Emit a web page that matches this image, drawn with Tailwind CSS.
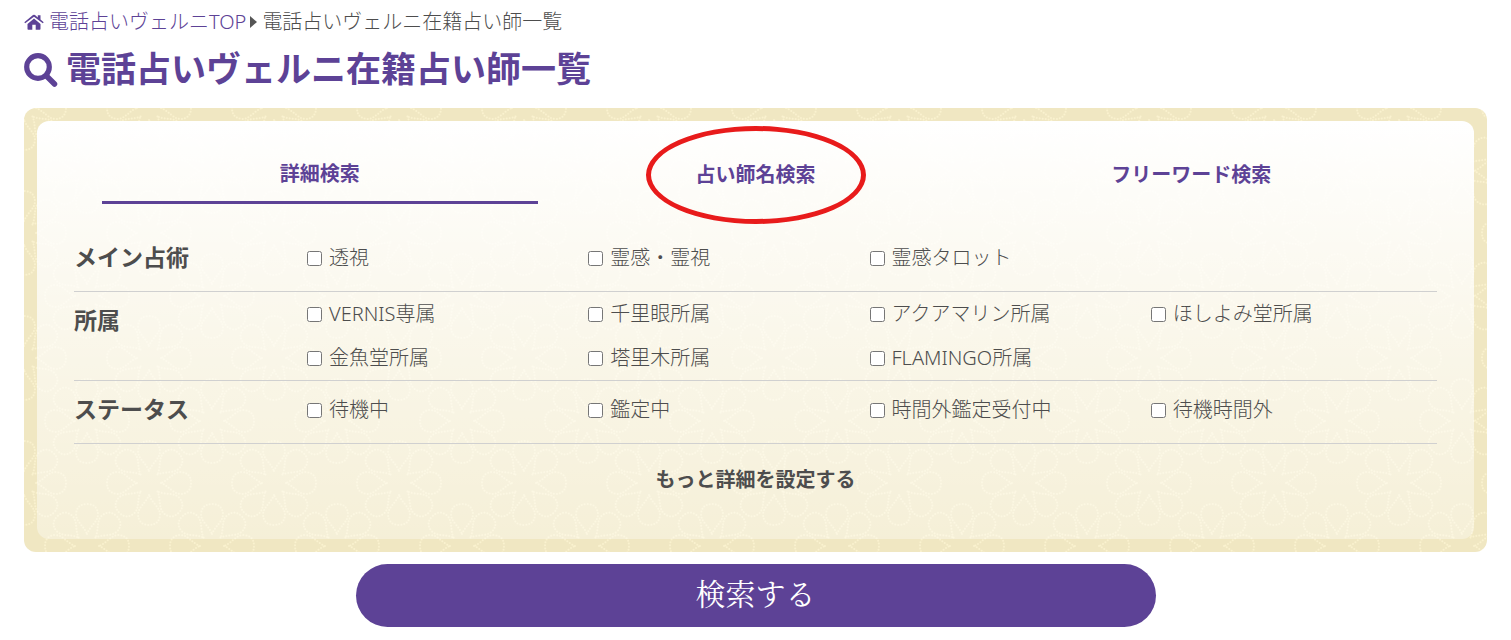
<!DOCTYPE html>
<html lang="ja">

<head>
    <meta charset="UTF-8">
    <meta name="viewport" content="width=device-width, initial-scale=1.0">
    <title>電話占いヴェルニ在籍占い師一覧</title>
    <script src="https://cdn.jsdelivr.net/npm/@tailwindcss/browser@4"></script>
</head>

<body class="bg-white font-['Noto_Sans','Noto_Sans_CJK_JP',sans-serif] text-xl leading-7 font-light text-[#4d4d4d]">
    <header class="px-6 pt-2">
        <!-- Breadcrumb -->
        <nav class="flex items-center">
            <a href="#" class="flex items-center gap-[5px] text-[#5d4296]">
                <svg class="w-5 h-5" viewBox="0 0 20 20" fill="currentColor" aria-hidden="true">
                    <path d="M10 6.500 3.500 12v5q0 .8.8.8h4v-5h3.400v5h4q.8 0 .8-.8v-5z" />
                    <path d="M.3 10.200 9 3q1-.7 2 0l2.800 2.400V3.300h2.700v4.300l3.200 2.600-.9 1L10 4.700l-8.800 6.500z" />
                </svg>
                電話占いヴェルニTOP
            </a>
            <svg class="mx-1 w-2 h-3" viewBox="0 0 8 12" fill="#555" aria-hidden="true"><path d="M0 0v12l7-6z" /></svg>
            <span>電話占いヴェルニ在籍占い師一覧</span>
        </nav>
        <h1 class="mt-[9px] flex items-center gap-2 text-[35px] leading-12 font-bold text-[#5d4296]">
            <svg class="w-[34px] h-9" viewBox="0 0 34 36" fill="none" stroke="currentColor" aria-hidden="true">
                <circle cx="14" cy="16" r="11.300" stroke-width="5.200" />
                <path d="m23 25.500 7.500 7.500" stroke-width="5.500" stroke-linecap="round" />
            </svg>
            電話占いヴェルニ在籍占い師一覧
        </h1>
    </header>

    <main class="px-6 pt-[15px]">
        <form>
            <section class="relative overflow-hidden rounded-xl bg-[#f0e7c2] p-[13px]">
                <!-- Flower pattern -->
                <svg class="absolute inset-0 w-full h-full" aria-hidden="true">
                    <defs>
                        <path id="petal" d="M0 12C-3 20-11 24-11 32Q-10 42 0 42 10 42 11 32C11 24 3 20 0 12z" />
                        <g id="flower" fill="none" stroke="#faf2cf" stroke-width="2" stroke-linecap="round" stroke-dasharray="0 3">
                            <use href="#petal" />
                            <use href="#petal" transform="rotate(45)" />
                            <use href="#petal" transform="rotate(90)" />
                            <use href="#petal" transform="rotate(135)" />
                            <use href="#petal" transform="rotate(180)" />
                            <use href="#petal" transform="rotate(225)" />
                            <use href="#petal" transform="rotate(270)" />
                            <use href="#petal" transform="rotate(315)" />
                        </g>
                        <pattern id="flowers" width="125" height="125" patternUnits="userSpaceOnUse">
                            <use href="#flower" />
                            <use href="#flower" x="125" />
                            <use href="#flower" y="125" />
                            <use href="#flower" x="125" y="125" />
                            <use href="#flower" x="63" y="63" />
                        </pattern>
                    </defs>
                    <rect width="100%" height="100%" fill="url(#flowers)" />
                </svg>

                <div class="relative rounded-xl bg-linear-to-b from-white to-white/35 px-[37px] pt-6 pb-[45px]">
                    <!-- Tabs -->
                    <div class="flex px-7 text-center font-bold text-[#5d4296]">
                        <button type="button" class="flex-1 border-b-3 border-[#5d4296] pt-[15px] pb-[13px]">詳細検索</button>
                        <button type="button" class="relative flex-1">
                            占い師名検索
                            <span class="absolute top-1/2 left-1/2 w-[220px] h-[98px] -translate-x-1/2 -translate-y-1/2 rounded-[50%] border-5 border-[#e81b1b]"></span>
                        </button>
                        <button type="button" class="flex-1">フリーワード検索</button>
                    </div>

                    <!-- Search conditions -->
                    <div class="mt-[25px]">
                        <fieldset class="flex border-b border-[#d0d0d0]">
                            <legend class="float-left w-[233px] shrink-0 text-[23px] leading-14 font-bold">メイン占術</legend>
                            <div class="grid flex-1 grid-cols-4 pt-[7px] pr-[5px] pb-[11px] leading-11">
                                <label class="flex items-center gap-[7px]"><input type="checkbox" class="size-[15px]">透視</label>
                                <label class="flex items-center gap-[7px]"><input type="checkbox" class="size-[15px]">霊感・霊視</label>
                                <label class="flex items-center gap-[7px]"><input type="checkbox" class="size-[15px]">霊感タロット</label>
                            </div>
                        </fieldset>
                        <fieldset class="flex border-b border-[#d0d0d0]">
                            <legend class="float-left w-[233px] shrink-0 text-[23px] leading-14 font-bold">所属</legend>
                            <div class="grid flex-1 grid-cols-4 pr-[5px] leading-11">
                                <label class="flex items-center gap-[7px]"><input type="checkbox" class="size-[15px]">VERNIS専属</label>
                                <label class="flex items-center gap-[7px]"><input type="checkbox" class="size-[15px]">千里眼所属</label>
                                <label class="flex items-center gap-[7px]"><input type="checkbox" class="size-[15px]">アクアマリン所属</label>
                                <label class="flex items-center gap-[7px]"><input type="checkbox" class="size-[15px]">ほしよみ堂所属</label>
                                <label class="flex items-center gap-[7px]"><input type="checkbox" class="size-[15px]">金魚堂所属</label>
                                <label class="flex items-center gap-[7px]"><input type="checkbox" class="size-[15px]">塔里木所属</label>
                                <label class="flex items-center gap-[7px]"><input type="checkbox" class="size-[15px]">FLAMINGO所属</label>
                            </div>
                        </fieldset>
                        <fieldset class="flex border-b border-[#d0d0d0]">
                            <legend class="float-left w-[233px] shrink-0 text-[23px] leading-14 font-bold">ステータス</legend>
                            <div class="grid flex-1 grid-cols-4 pt-[7px] pr-[5px] pb-[11px] leading-11">
                                <label class="flex items-center gap-[7px]"><input type="checkbox" class="size-[15px]">待機中</label>
                                <label class="flex items-center gap-[7px]"><input type="checkbox" class="size-[15px]">鑑定中</label>
                                <label class="flex items-center gap-[7px]"><input type="checkbox" class="size-[15px]">時間外鑑定受付中</label>
                                <label class="flex items-center gap-[7px]"><input type="checkbox" class="size-[15px]">待機時間外</label>
                            </div>
                        </fieldset>
                    </div>

                    <button type="button" class="mx-auto mt-[22px] block font-bold">もっと詳細を設定する</button>
                </div>
            </section>

            <button type="submit" class="mx-auto mt-3 block w-full max-w-[800px] rounded-full bg-[#5d4296] pt-2 pb-[15px] font-['Noto_Serif_CJK_JP','Liberation_Serif','Noto_Sans_CJK_JP',serif] text-3xl leading-10 font-normal text-white">検索する</button>
        </form>
    </main>
</body>

</html>
